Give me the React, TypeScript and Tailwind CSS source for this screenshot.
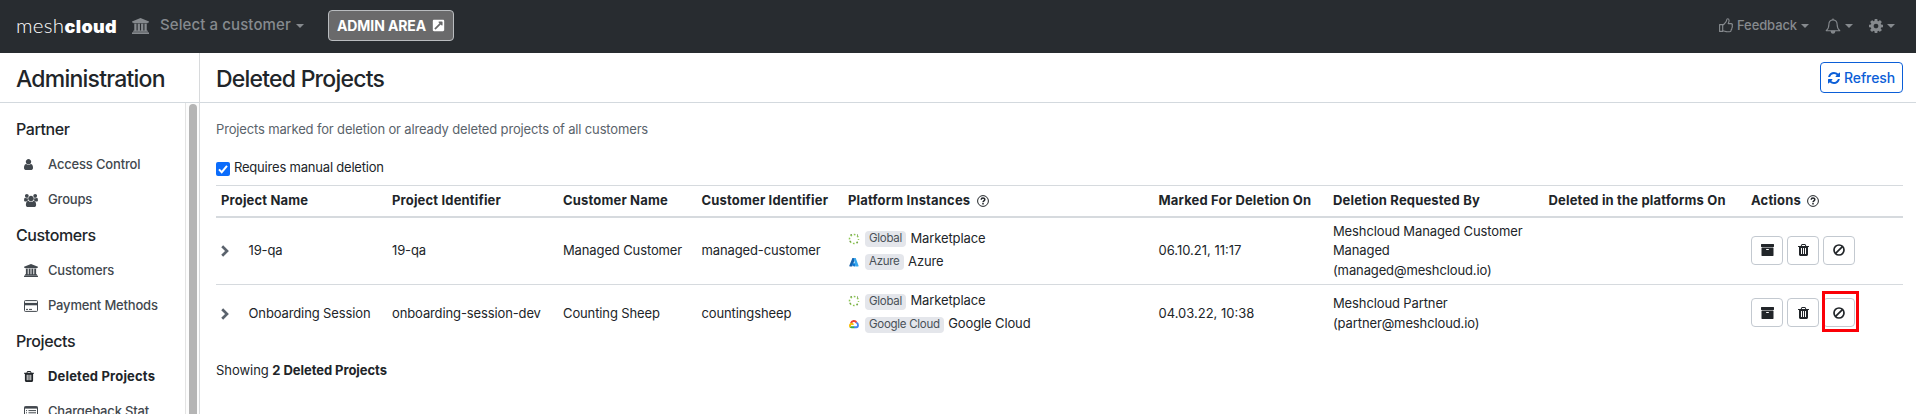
import React from "react";
import { FaExternalLinkSquareAlt } from "react-icons/fa";

type GlyphProps = { className?: string };

const University = ({ className }: GlyphProps) => (
  <svg viewBox="0 0 1920 1792" className={className} fill="currentColor">
    <path d="M960 0l960 384v128h-128q0 26-20.5 45t-48.5 19h-1526q-28 0-48.5-19t-20.5-45h-128v-128zm-704 640h256v768h128v-768h256v768h128v-768h256v768h128v-768h256v768h59q28 0 48.5 19t20.5 45v64h-1664v-64q0-26 20.5-45t48.5-19h59v-768zm1595 960q28 0 48.5 19t20.5 45v128h-1920v-128q0-26 20.5-45t48.5-19h1782z" />
  </svg>
);
const User = ({ className }: GlyphProps) => (
  <svg viewBox="256 0 1280 1792" className={className} fill="currentColor">
    <path d="M1536 1399q0 109-62.5 187t-150.5 78h-854q-88 0-150.5-78t-62.5-187q0-85 8.5-160.5t31.5-152 58.5-131 94-89 134.5-34.5q131 128 313 128t313-128q76 0 134.5 34.5t94 89 58.5 131 31.5 152 8.5 160.5zm-256-887q0 159-112.5 271.5t-271.5 112.5-271.5-112.5-112.5-271.5 112.5-271.5 271.5-112.5 271.5 112.5 112.5 271.5z" />
  </svg>
);
const Users = ({ className }: GlyphProps) => (
  <svg viewBox="0 0 1920 1792" className={className} fill="currentColor">
    <path d="M593 896q-162 5-265 128h-134q-82 0-138-40.5t-56-118.5q0-353 124-353 6 0 43.5 21t97.5 42.5 119 21.5q67 0 133-23-5 37-5 66 0 139 81 256zm1071 637q0 120-73 189.5t-194 69.5h-874q-121 0-194-69.5t-73-189.5q0-53 3.5-103.5t14-109 26.5-108.5 43-97.5 62-81 85.5-53.5 111.5-20q10 0 43 21.5t73 48 107 48 135 21.5 135-21.5 107-48 73-48 43-21.5q61 0 111.5 20t85.5 53.5 62 81 43 97.5 26.5 108.5 14 109 3.5 103.5zm-1024-1277q0 106-75 181t-181 75-181-75-75-181 75-181 181-75 181 75 75 181zm704 384q0 159-112.5 271.5t-271.5 112.5-271.5-112.5-112.5-271.5 112.5-271.5 271.5-112.5 271.5 112.5 112.5 271.5zm576 225q0 78-56 118.5t-138 40.5h-134q-103-123-265-128 81-117 81-256 0-29-5-66 66 23 133 23 59 0 119-21.5t97.5-42.5 43.5-21q124 0 124 353zm-128-609q0 106-75 181t-181 75-181-75-75-181 75-181 181-75 181 75 75 181z" />
  </svg>
);
const Trash = ({ className }: GlyphProps) => (
  <svg viewBox="192 128 1408 1536" className={className} fill="currentColor">
    <path d="M704 1376v-704q0-14-9-23t-23-9h-64q-14 0-23 9t-9 23v704q0 14 9 23t23 9h64q14 0 23-9t9-23zm256 0v-704q0-14-9-23t-23-9h-64q-14 0-23 9t-9 23v704q0 14 9 23t23 9h64q14 0 23-9t9-23zm256 0v-704q0-14-9-23t-23-9h-64q-14 0-23 9t-9 23v704q0 14 9 23t23 9h64q14 0 23-9t9-23zm-544-992h448l-48-117q-7-9-17-11h-317q-10 2-17 11zm928 32v64q0 14-9 23t-23 9h-96v948q0 83-47 143.5t-113 60.5h-832q-66 0-113-58.5t-47-141.5v-952h-96q-14 0-23-9t-9-23v-64q0-14 9-23t23-9h309l70-167q15-37 54-63t79-26h320q40 0 79 26t54 63l70 167h309q14 0 23 9t9 23z" />
  </svg>
);
const Archive = ({ className }: GlyphProps) => (
  <svg viewBox="64 128 1664 1536" className={className} fill="currentColor">
    <path d="M1088 832q0-26-19-45t-45-19h-256q-26 0-45 19t-19 45 19 45 45 19h256q26 0 45-19t19-45zm576-192v960q0 26-19 45t-45 19h-1408q-26 0-45-19t-19-45v-960q0-26 19-45t45-19h1408q26 0 45 19t19 45zm64-448v256q0 26-19 45t-45 19h-1536q-26 0-45-19t-19-45v-256q0-26 19-45t45-19h1536q26 0 45 19t19 45z" />
  </svg>
);
const Refresh = ({ className }: GlyphProps) => (
  <svg viewBox="128 128 1536 1536" className={className} fill="currentColor">
    <path d="M1639 1056q0 5-1 7-64 268-268 434.5t-478 166.5q-146 0-282.5-55t-243.5-157l-129 129q-19 19-45 19t-45-19-19-45v-448q0-26 19-45t45-19h448q26 0 45 19t19 45-19 45l-137 137q71 66 161 102t187 36q134 0 250-65t186-179q11-17 53-117 8-23 30-23h192q13 0 22.5 9.5t9.5 22.5zm25-800v448q0 26-19 45t-45 19h-448q-26 0-45-19t-19-45 19-45l138-138q-148-137-349-137-134 0-250 65t-186 179q-11 17-53 117-8 23-30 23h-199q-13 0-22.5-9.5t-9.5-22.5v-7q65-268 270-434.5t480-166.5q146 0 284 55.5t245 156.5l130-129q19-19 45-19t45 19 19 45z" />
  </svg>
);
const Cog = ({ className }: GlyphProps) => (
  <svg viewBox="128 128 1536 1536" className={className} fill="currentColor">
    <path d="M1152 896q0-106-75-181t-181-75-181 75-75 181 75 181 181 75 181-75 75-181zm512-109v222q0 12-8 23t-20 13l-185 28q-19 54-39 91 35 50 107 138 10 12 10 25t-9 23q-27 37-99 108t-94 71q-12 0-26-9l-138-108q-44 23-91 38-16 136-29 186-7 28-36 28h-222q-14 0-24.5-8.5t-11.5-21.5l-28-184q-49-16-90-37l-141 107q-10 9-25 9-14 0-25-11-126-114-165-168-7-10-7-23 0-12 8-23 15-21 51-66.5t54-70.5q-27-50-41-99l-183-27q-13-2-21-12.5t-8-23.5v-222q0-12 8-23t19-13l186-28q14-46 39-92-40-57-107-138-10-12-10-24 0-10 9-23 26-36 98.5-107.5t94.5-71.5q13 0 26 10l138 107q44-23 91-38 16-136 29-186 7-28 36-28h222q14 0 24.5 8.5t11.5 21.5l28 184q49 16 90 37l142-107q9-9 24-9 13 0 25 10 129 119 165 170 7 8 7 22 0 12-8 23-15 21-51 66.5t-54 70.5q26 50 41 98l183 28q13 2 21 12.5t8 23.5z" />
  </svg>
);
const CreditCard = ({ className }: GlyphProps) => (
  <svg viewBox="0 0 14 12" className={className} fill="none" stroke="currentColor">
    <rect x="0.5" y="0.6" width="13" height="10.8" rx="0.8" />
    <path d="M0.5 4.1h13" strokeWidth="2.4" />
    <path d="M2 9.4h2M5 9.4h3" />
  </svg>
);
const ListAlt = ({ className }: GlyphProps) => (
  <svg viewBox="0 0 14 12" className={className} fill="none" stroke="currentColor">
    <rect x="0.5" y="0.6" width="13" height="10.8" rx="0.8" />
    <path d="M0.5 1.6h13" strokeWidth="2" />
    <path d="M2 4.6h1M4.5 4.6h7.5M2 6.8h1M4.5 6.8h7.5M2 9h1M4.5 9h7.5" />
  </svg>
);
const Ban = ({ className }: GlyphProps) => (
  <svg viewBox="0 0 12 12" className={className} fill="none" stroke="currentColor" strokeWidth="1.7">
    <circle cx="6" cy="6" r="5" />
    <path d="M2.6 9.4L9.4 2.6" />
  </svg>
);
const Help = ({ className }: GlyphProps) => (
  <svg viewBox="0 0 12 12" className={className} fill="none" stroke="currentColor">
    <circle cx="6" cy="6" r="5.4" strokeWidth="1" />
    <path d="M4.2 4.7C4.2 2.5 7.8 2.5 7.8 4.6C7.8 5.8 6 5.8 6 7.2" strokeWidth="1.5" />
    <path d="M6 8v1.4" strokeWidth="1.5" />
  </svg>
);
const Chevron = ({ className }: GlyphProps) => (
  <svg viewBox="0 0 8 12" className={className} fill="none" stroke="currentColor" strokeWidth="2.7">
    <path d="M1.2 1.2L6 6L1.2 10.8" />
  </svg>
);
const ThumbsUp = ({ className }: GlyphProps) => (
  <svg viewBox="0 0 14 15" className={className} fill="none" stroke="currentColor" strokeWidth="1.1" strokeLinejoin="round">
    <path d="M0.6 6.6h3.1v6.8H0.6z" />
    <path d="M3.7 7c1.6-.6 2.6-2.3 3.4-3.4.7-.9.4-2.9 1.4-2.9 2.3 0 1.7 3 .7 4.9h2.8c1.6 0 1.7 1.6 1 2.2.7.7.5 1.8-.3 2.1.4.8 0 1.7-.6 1.9.2 1.2-.5 1.9-1.5 1.9H8.2c-1.8 0-3-.9-4.5-.9" />
  </svg>
);
const Bell = ({ className }: GlyphProps) => (
  <svg viewBox="0 0 16 16" className={className} fill="none" stroke="currentColor" strokeWidth="1.1" strokeLinejoin="round">
    <path d="M8 1.9C5.3 1.9 3.9 4 3.9 6.2C3.9 9.6 2.9 11.3 1.2 12.7H14.8C13.1 11.3 12.1 9.6 12.1 6.2C12.1 4 10.7 1.9 8 1.9z" />
    <path d="M8 0.4v1.5" />
    <path d="M6.2 13.3c.2 1.2.9 1.8 1.8 1.8s1.6-.6 1.8-1.8z" fill="currentColor" />
  </svg>
);
const Caret = ({ className }: GlyphProps) => (
  <svg viewBox="0 0 8 4" className={className} fill="currentColor">
    <path d="M0 0h8L4 4z" />
  </svg>
);

const MarketplaceLogo = () => (
  <svg viewBox="0 0 12 12" className="size-[12px]" fill="none">
    <circle cx="6" cy="6" r="4.5" stroke="#8cc751" strokeWidth="1.5" strokeDasharray="1.7 1.84" strokeDashoffset="0.8" />
    <path d="M2.6 1.5h1M9 2h1M8.8 9.8h1M1.6 8.2h1" stroke="#4d6b35" strokeWidth="0.9" />
  </svg>
);
const AzureLogo = () => (
  <svg viewBox="0 0 12 12" className="size-[12px]">
    <path d="M4.4 1.9h3L4.2 10.5H1.9c-.5 0-.7-.4-.6-.8z" fill="#1561ad" />
    <path d="M4.5 7.2h4l-1.5 3.3H5.8L3.6 8.4z" fill="#0f78d4" />
    <path d="M5.6 1.9h2.1L10.6 9.7c.1.4-.1.8-.6.8H7.5z" fill="#35a7ee" />
  </svg>
);
const GoogleCloudLogo = () => (
  <svg viewBox="0 0 12 12" className="size-[12px]" fill="none" strokeWidth="1.9">
    <path d="M3 5.3C3.5 2.7 7.2 2.1 8.6 4.8" stroke="#ea4335" />
    <path d="M8.3 4.7C10.7 5.4 10.4 9.2 8.4 9.2H6" stroke="#4285f4" />
    <path d="M6.2 9.2H3.7C3.1 9.2 2.6 9 2.2 8.7" stroke="#34a853" />
    <path d="M2.5 9C1.3 7.8 2.1 5.7 3.7 5.7C4.5 5.7 5 6.1 5.2 6.7" stroke="#fbbc05" />
  </svg>
);

const GRID =
  "grid grid-cols-[171px_171px_138.5px_146.5px_310.5px_174.5px_215.5px_202.5px_157px]";

function NavItem({ icon, label, active }: { icon: React.ReactNode; label: string; active?: boolean }) {
  return (
    <div className="flex h-[35.3px] items-center pl-6">
      <span className="flex w-[24px] items-center">{icon}</span>
      <span
        className={
          active
            ? "whitespace-nowrap text-[13px] font-bold tracking-[0.18px] text-[#212529]"
            : "whitespace-nowrap text-[13px] font-medium tracking-[-0.18px] text-[#42484e]"
        }
      >
        {label}
      </span>
    </div>
  );
}

function Section({ title }: { title: string }) {
  return (
    <div className="flex h-[35.3px] items-center pb-px pl-4 text-[16px] font-medium tracking-[-0.4px]">{title}</div>
  );
}

type Instance = { logo: React.ReactNode; tag: string; name: string };
type Row = {
  name: string;
  id: string;
  customer: string;
  customerId: string;
  instances: Instance[];
  marked: string;
  by: string[];
  flagged?: boolean;
};

const rows: Row[] = [
  {
    name: "19-qa",
    id: "19-qa",
    customer: "Managed Customer",
    customerId: "managed-customer",
    instances: [
      { logo: <MarketplaceLogo />, tag: "Global", name: "Marketplace" },
      { logo: <AzureLogo />, tag: "Azure", name: "Azure" },
    ],
    marked: "06.10.21, 11:17",
    by: ["Meshcloud Managed Customer", "Managed", "(managed@meshcloud.io)"],
  },
  {
    name: "Onboarding Session",
    id: "onboarding-session-dev",
    customer: "Counting Sheep",
    customerId: "countingsheep",
    instances: [
      { logo: <MarketplaceLogo />, tag: "Global", name: "Marketplace" },
      { logo: <GoogleCloudLogo />, tag: "Google Cloud", name: "Google Cloud" },
    ],
    marked: "04.03.22, 10:38",
    by: ["Meshcloud Partner", "(partner@meshcloud.io)"],
    flagged: true,
  },
];

function ActionButton({ children, flagged }: { children: React.ReactNode; flagged?: boolean }) {
  return (
    <button className="relative flex h-[29px] w-8 items-center justify-center rounded-[4px] border border-[#c3c9d0]">
      {children}
      {flagged && <span className="absolute -left-[2px] -top-2 h-[41px] w-[37px] border-[3px] border-[#fb0007]" />}
    </button>
  );
}

function TableRow({ row, className }: { row: Row; className: string }) {
  return (
    <div className={`${GRID} items-center tracking-[-0.12px] ${className}`}>
      <div className="flex items-center pl-[5px]">
        <Chevron className="mr-[19.5px] h-3 w-2 text-[#5b636d]" />
        {row.name}
      </div>
      <div className="pl-[5px]">{row.id}</div>
      <div className="pl-[5px]">{row.customer}</div>
      <div className="pl-[5px]">{row.customerId}</div>
      <div className="flex flex-col gap-[7px] pb-[2px] pl-[5px]">
        {row.instances.map((i) => (
          <div key={i.name} className="flex h-4 items-center">
            {i.logo}
            <span className="ml-[5px] mr-[4.5px] mt-px flex h-4 items-center rounded-[4px] bg-[#e4e6eb] px-1 text-[11.5px] tracking-[-0.28px] text-[#495057]">
              {i.tag}
            </span>
            {i.name}
          </div>
        ))}
      </div>
      <div className="pl-[5px] tracking-normal">{row.marked}</div>
      <div className="pl-[5px] leading-[19.5px]">
        {row.by.map((l) => (
          <div key={l}>{l}</div>
        ))}
      </div>
      <div />
      <div className="flex gap-1 pb-[2px] pl-[5px]">
        <ActionButton>
          <Archive className="h-3 w-[13px]" />
        </ActionButton>
        <ActionButton>
          <Trash className="h-3 w-[11px]" />
        </ActionButton>
        <ActionButton flagged={row.flagged}>
          <Ban className="size-3" />
        </ActionButton>
      </div>
    </div>
  );
}

export default function App() {
  return (
    <div className="flex h-[414px] w-[1916px] flex-col overflow-hidden bg-white font-['Inter',sans-serif] text-[13px] text-[#212529]">
      <header className="flex h-[53px] shrink-0 items-center bg-[#282c30] pb-[2px] pl-4 pr-[21px] text-[#868a8e]">
        <div className="flex w-[101px] items-baseline whitespace-nowrap pb-px leading-none text-white">
          <span className="w-[48.5px] font-['Lato',sans-serif] text-[20.5px] font-light tracking-[0.3px]">mesh</span>
          <span className="text-[18px] font-black tracking-[0.35px]">cloud</span>
        </div>
        <University className="ml-[15px] h-4 w-[17px]" />
        <span className="ml-[11px] w-[132px] whitespace-nowrap text-[15px] font-medium tracking-[0.1px]">
          Select a customer
        </span>
        <Caret className="ml-[4px] h-[4px] w-2" />
        <div className="ml-[24px] flex h-[31px] w-[126px] items-center rounded-[4px] border border-[#b9bcbf] bg-[#6a6a6b] pl-2 text-[14px] font-bold tracking-[-0.1px] text-white">
          <span className="w-[95px] whitespace-nowrap">ADMIN AREA</span>
          <FaExternalLinkSquareAlt className="size-[13px]" />
        </div>
        <div className="ml-auto flex items-center">
          <ThumbsUp className="h-[15px] w-[14px]" />
          <span className="ml-[4px] w-[60px] whitespace-nowrap text-[13px] font-medium tracking-[-0.1px]">Feedback</span>
          <Caret className="ml-[4px] h-[4px] w-2" />
          <Bell className="ml-[16px] size-4" />
          <Caret className="ml-[4px] h-[4px] w-2" />
          <Cog className="ml-[16px] size-[14px]" />
          <Caret className="ml-[4px] h-[4px] w-2" />
        </div>
      </header>
      <div className="flex min-h-0 flex-1">
        <aside className="flex w-[200px] shrink-0 flex-col border-r border-[#d8dadc]">
          <h1 className="flex h-[50px] shrink-0 items-center border-b border-[#d3d9de] pl-4 pt-[3px] text-[23px] font-medium tracking-[-0.78px]">
            Administration
          </h1>
          <div className="flex min-h-0 flex-1 overflow-hidden">
            <nav className="w-[185px] overflow-hidden pt-[9px]">
              <Section title="Partner" />
              <NavItem icon={<User className="h-[13px] w-[9px] text-[#42484e]" />} label="Access Control" />
              <NavItem icon={<Users className="h-[13px] w-[14px] text-[#42484e]" />} label="Groups" />
              <Section title="Customers" />
              <NavItem icon={<University className="h-[13px] w-[14px] text-[#42484e]" />} label="Customers" />
              <NavItem icon={<CreditCard className="h-3 w-[14px] text-[#42484e]" />} label="Payment Methods" />
              <Section title="Projects" />
              <NavItem active icon={<Trash className="h-[11px] w-[10px]" />} label="Deleted Projects" />
              <NavItem icon={<ListAlt className="h-3 w-[14px] text-[#42484e]" />} label="Chargeback Stat…" />
            </nav>
            <div className="flex w-[14px] justify-center border-l border-[#e3e3e3] bg-[#fcfcfc] pt-[1px]">
              <div className="h-[330px] w-2 rounded-t-full bg-[#b5b5b5]" />
            </div>
          </div>
        </aside>
        <main className="min-w-0 flex-1">
          <div className="flex h-[50px] items-center justify-between border-b border-[#d3d9de] pl-4 pr-[13px]">
            <h2 className="pt-[3px] text-[23px] font-medium tracking-[-0.78px]">Deleted Projects</h2>
            <button className="flex h-[31px] w-[83px] items-center rounded-[4px] border border-[#0b5ed7] pl-[7px] text-[14px] font-medium tracking-[-0.1px] text-[#0b5ed7]">
              <Refresh className="mr-[4px] size-3" />
              Refresh
            </button>
          </div>
          <div className="pl-4 pr-[13px]">
            <p className="h-5 pt-[16px] leading-5 tracking-[-0.155px] text-[#5a636b]">
              Projects marked for deletion or already deleted projects of all customers
            </p>
            <label className="mt-[35px] flex h-5 items-center tracking-[-0.2px]">
              <span className="mr-[4px] mt-[2px] flex size-[14px] items-center justify-center rounded-[2px] bg-[#0b6cfb]">
                <svg viewBox="0 0 14 14" className="size-[14px]" fill="none" stroke="#fff" strokeWidth="2">
                  <path d="M3 7.4L5.7 10.2L11 3.8" />
                </svg>
              </span>
              Requires manual deletion
            </label>
            <div className={`${GRID} mt-[7px] h-[33px] items-center whitespace-nowrap border-b-2 border-t border-[#d6dade] pb-px text-[13px] font-bold tracking-[0.17px] [&>div]:pl-[5px]`}>
              <div>Project Name</div>
              <div>Project Identifier</div>
              <div>Customer Name</div>
              <div>Customer Identifier</div>
              <div className="flex items-center">
                Platform Instances <Help className="ml-[7px] size-3" />
              </div>
              <div>Marked For Deletion On</div>
              <div>Deletion Requested By</div>
              <div>Deleted in the platforms On</div>
              <div className="flex items-center">
                Actions <Help className="ml-[6px] size-3" />
              </div>
            </div>
            <TableRow row={rows[0]} className="h-[67px] border-b border-[#d6dade]" />
            <TableRow row={rows[1]} className="h-[57px]" />
            <p className="mt-[18px] leading-5 tracking-[-0.05px]">
              Showing <b>2 Deleted Projects</b>
            </p>
          </div>
        </main>
      </div>
    </div>
  );
}
